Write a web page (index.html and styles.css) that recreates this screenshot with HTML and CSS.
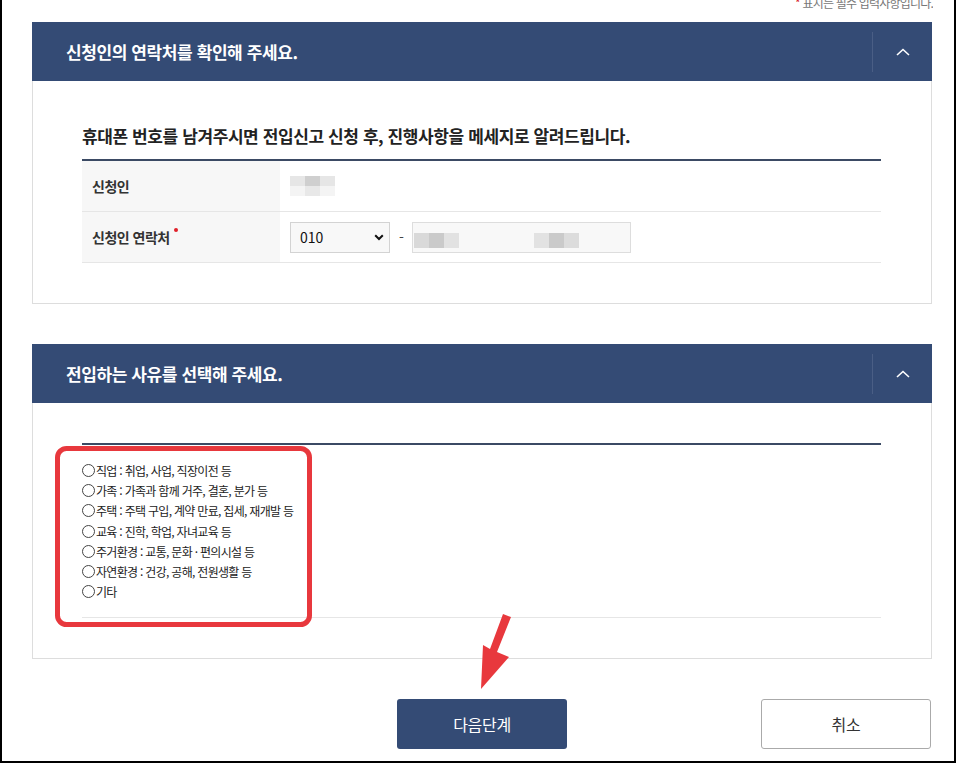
FILE: index.html
```html
<!DOCTYPE html>
<html lang="ko">
  <head>
    <meta charset="utf-8" />
    <meta name="viewport" content="width=device-width, initial-scale=1" />
    <title>전입신고</title>
    <link rel="stylesheet" href="styles.css">
  </head>
  <body>
    <div class="frame">
      <div class="note">
        <p><span class="req">*</span> 표시는 필수 입력사항입니다.</p>
      </div>

      <section class="panel">
        <div class="panel-head">
          <h2 class="panel-title">신청인의 연락처를 확인해 주세요.</h2>
          <button class="toggle" type="button" aria-label="접기">
            <svg width="14" height="8" viewBox="0 0 14 8"><polyline points="1,7 7,1.5 13,7" fill="none" stroke="#fff" stroke-width="1.6"/></svg>
          </button>
        </div>
        <div class="panel-body">
          <p class="lead">휴대폰 번호를 남겨주시면 전입신고 신청 후, 진행사항을 메세지로 알려드립니다.</p>
          <table class="form-table">
            <tr>
              <th>신청인</th>
              <td>
                <div class="mosaic">
                  <i class="c1"></i><i class="c2"></i><i class="c1"></i>
                  <i class="c3"></i><i class="c4"></i><i class="c3"></i>
                </div>
              </td>
            </tr>
            <tr>
              <th>신청인 연락처<span class="dot"></span></th>
              <td>
                <div class="phone">
                  <div class="select-wrap">
                    <select class="select">
                      <option>010</option>
                    </select>
                    <svg class="caret" width="10" height="7" viewBox="0 0 10 7"><polyline points="1.2,1.2 5,5 8.8,1.2" fill="none" stroke="#111" stroke-width="2"/></svg>
                  </div>
                  <span class="dash">-</span>
                  <div class="field">
                    <div class="chunk"><i class="p1"></i><i class="p2"></i><i class="p3"></i></div>
                    <div class="chunk chunk-b"><i class="p3"></i><i class="p2"></i><i class="p4"></i></div>
                  </div>
                </div>
              </td>
            </tr>
          </table>
        </div>
      </section>

      <section class="panel panel-gap">
        <div class="panel-head">
          <h2 class="panel-title">전입하는 사유를 선택해 주세요.</h2>
          <button class="toggle" type="button" aria-label="접기">
            <svg width="14" height="8" viewBox="0 0 14 8"><polyline points="1,7 7,1.5 13,7" fill="none" stroke="#fff" stroke-width="1.6"/></svg>
          </button>
        </div>
        <div class="panel-body panel-body-2">
          <div class="reasons">
            <label class="reason"><input type="radio" name="reason"> 직업 : 취업, 사업, 직장이전 등</label>
            <label class="reason"><input type="radio" name="reason"> 가족 : 가족과 함께 거주, 결혼, 분가 등</label>
            <label class="reason"><input type="radio" name="reason"> 주택 : 주택 구입, 계약 만료, 집세, 재개발 등</label>
            <label class="reason"><input type="radio" name="reason"> 교육 : 진학, 학업, 자녀교육 등</label>
            <label class="reason"><input type="radio" name="reason"> 주거환경 : 교통, 문화 · 편의시설 등</label>
            <label class="reason"><input type="radio" name="reason"> 자연환경 : 건강, 공해, 전원생활 등</label>
            <label class="reason"><input type="radio" name="reason"> 기타</label>
          </div>
        </div>
      </section>

      <div class="actions">
        <button class="btn btn-primary" type="button">다음단계</button>
        <button class="btn btn-cancel" type="button">취소</button>
      </div>

      <!-- screenshot annotations -->
      <svg class="marks" width="956" height="763" viewBox="0 0 956 763">
        <rect x="57.5" y="448.5" width="252" height="176" rx="9" fill="none" stroke="#e8383d" stroke-width="5"/>
        <polygon points="503,614 511,617 497,652 509,657 481,689 483,645 490,649" fill="#e8383d"/>
      </svg>
    </div>
  </body>
</html>
```

FILE: styles.css
```css
html {
  background: #fff;
}
body {
  margin: 0;
  font-family: "Noto Sans CJK KR", "Noto Sans", sans-serif;
  color: #222;
}

.frame {
  position: relative;
  box-sizing: border-box;
  width: 956px;
  height: 763px;
  overflow: hidden;
  display: flex;
  flex-direction: column;
  padding: 0 21px 0 30px;
  border-left: 2px solid #000;
  border-right: 2px solid #000;
  border-bottom: 2px solid #000;
}

/* required note, cut off at the top */
.note {
  height: 22px;
  overflow: hidden;
}
.note p {
  margin: -5px 0 0;
  text-align: right;
  font-size: 12px;
  line-height: 16px;
  letter-spacing: -0.8px;
  color: #777;
}
.req {
  color: #d8262e;
}

/* panels */
.panel {
  width: 900px;
}
.panel-gap {
  margin-top: 40px;
}
.panel-head {
  display: flex;
  align-items: center;
  height: 59px;
  background: #344b75;
}
.panel-title {
  flex: 1;
  margin: 0;
  padding-left: 34px;
  font-size: 17px;
  font-weight: 700;
  line-height: 24px;
  letter-spacing: -0.4px;
  color: #fff;
}
.toggle {
  display: flex;
  align-items: center;
  justify-content: center;
  width: 60px;
  height: 40px;
  padding: 0;
  border: 0;
  border-left: 1px solid #4a5e85;
  background: none;
}

.panel-body {
  padding: 43px 50px 40px 49px;
  border: 1px solid #ddd;
  border-top: 0;
}
.panel-body-2 {
  padding-top: 40px;
}

.lead {
  margin: 0 0 11px;
  font-size: 17px;
  font-weight: 700;
  line-height: 24px;
  letter-spacing: -0.4px;
  color: #222;
}

/* contact table */
.form-table {
  width: 100%;
  border-collapse: collapse;
  border-top: 2px solid #3b4a64;
}
.form-table th,
.form-table td {
  height: 50px;
  padding: 0;
  border-bottom: 1px solid #e6e6e6;
  vertical-align: middle;
}
.form-table th {
  width: 188px;
  padding-left: 10px;
  background: #f7f7f7;
  text-align: left;
  font-size: 14px;
  font-weight: 700;
  letter-spacing: -0.5px;
  color: #333;
}
.form-table td {
  padding-left: 10px;
}
.dot {
  display: inline-block;
  width: 4px;
  height: 4px;
  margin-left: 4px;
  border-radius: 50%;
  background: #e0202a;
  vertical-align: 11px;
}

/* masked personal data */
.mosaic {
  display: grid;
  grid-template-columns: repeat(3, 15px);
  grid-template-rows: 10px 10px;
  width: 45px;
  filter: blur(0.6px);
}
.mosaic i,
.chunk i {
  display: block;
}
.c1 { background: #e6e6e6; }
.c2 { background: #cfcfcf; }
.c3 { background: #f4f4f4; }
.c4 { background: #e8e8e8; }

.phone {
  display: flex;
  align-items: center;
}
.select-wrap {
  position: relative;
}
.select {
  appearance: none;
  -webkit-appearance: none;
  box-sizing: border-box;
  width: 100px;
  height: 31px;
  padding: 0 0 0 9px;
  border: 1px solid #d3d3d3;
  border-radius: 0;
  background: #f8f8f8;
  font-family: inherit;
  font-size: 14px;
  color: #111;
}
.caret {
  position: absolute;
  top: 12px;
  right: 6px;
}
.dash {
  margin: 0 8px 0 9px;
  font-size: 14px;
  color: #444;
}
.field {
  display: flex;
  align-items: flex-end;
  box-sizing: border-box;
  width: 219px;
  height: 31px;
  padding: 0 0 4px 1px;
  border: 1px solid #ddd;
  background: #f8f8f8;
}
.chunk {
  display: grid;
  grid-template-columns: repeat(3, 15px);
  height: 15px;
  filter: blur(0.5px);
}
.chunk-b {
  margin-left: 75px;
}
.p1 { background: #d9d9d9; }
.p2 { background: #cacaca; }
.p3 { background: #e2e2e2; }
.p4 { background: #dcdcdc; }

/* reasons */
.reasons {
  display: flex;
  flex-direction: column;
  padding: 15px 0;
  border-top: 2px solid #3b4a64;
  border-bottom: 1px solid #e6e6e6;
}
.reason {
  display: flex;
  align-items: center;
  height: 20.3px;
  font-size: 12px;
  letter-spacing: -0.7px;
  color: #222;
}
.reason input {
  appearance: none;
  -webkit-appearance: none;
  box-sizing: border-box;
  width: 13px;
  height: 13px;
  margin: 0 1px 0 0;
  border: 1px solid #444;
  border-radius: 50%;
  background: #fff;
}

/* buttons */
.actions {
  display: grid;
  grid-template-columns: 1fr auto 1fr;
  width: 900px;
  margin-top: 40px;
}
.btn {
  width: 170px;
  height: 50px;
  border-radius: 3px;
  font-family: inherit;
  font-size: 16px;
  letter-spacing: -0.3px;
}
.btn-primary {
  grid-column: 2;
  border: 0;
  background: #344b75;
  color: #fff;
}
.btn-cancel {
  grid-column: 3;
  justify-self: end;
  margin-right: 1px;
  border: 1px solid #aaa;
  background: #fff;
  color: #333;
}

/* annotations drawn over the page */
.marks {
  position: absolute;
  top: 0;
  left: -2px;
  pointer-events: none;
}
```
